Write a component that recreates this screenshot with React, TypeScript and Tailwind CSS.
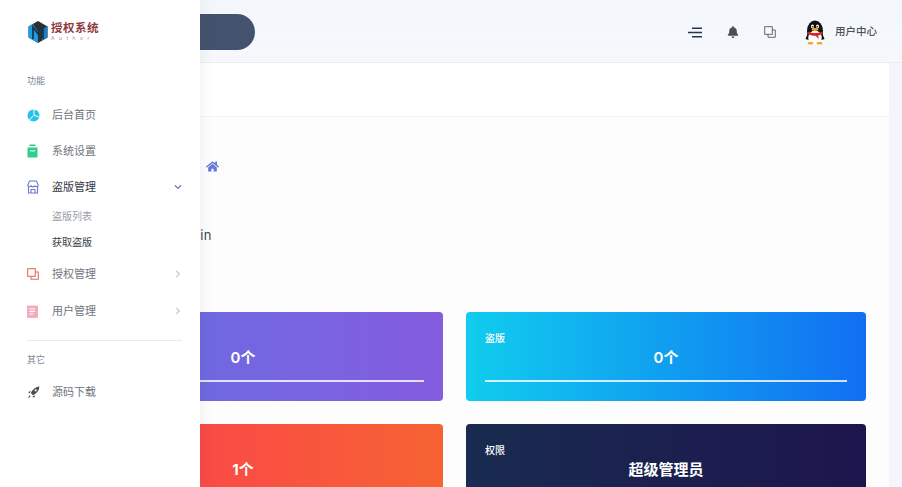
import React from 'react';
import { FaBell, FaHome, FaChevronDown, FaChevronRight } from 'react-icons/fa';

const font = "font-['Inter','Noto_Sans_CJK_SC',sans-serif]";

// Logo hexagon
const LogoMark = () => (
  <svg width="20" height="22" viewBox="0 0 20 22">
    <path d="M10 0 L19.5 5.5 V16.5 L10 22 L0.5 16.5 V5.5 Z" fill="#2b2f36" />
    <path d="M0.5 5.5 L5 3 L10 11 V22 L0.5 16.5 Z" fill="#1f9ce0" />
    <path d="M19.5 5.5 V16.5 L14 19.5 V8 Z" fill="#1a7fc0" />
    <path d="M5 18 V6 L10 13 L15 6 V18" fill="none" stroke="#17384f" strokeWidth="1.8" />
  </svg>
);

const PieIcon = () => (
  <svg width="13" height="13" viewBox="0 0 13 13">
    <circle cx="6.5" cy="6.5" r="6" fill="#27c2ec" />
    <path d="M7 6.2 V0 M7 6.2 L13 8.5 M6.5 6.5 L2 11.5" stroke="#fff" strokeWidth="1" />
  </svg>
);

const BagIcon = () => (
  <svg width="11" height="14" viewBox="0 0 11 14">
    <rect x="2.5" y="0.5" width="6" height="1.6" fill="#2fce8a" />
    <path d="M0.5 3.5 H10.5 V13.5 H0.5 Z" fill="#2fce8a" />
    <path d="M3.5 6 V7 H7.5 V6" stroke="#fff" strokeWidth="1" fill="none" />
  </svg>
);

const StoreIcon = () => (
  <svg width="12" height="14" viewBox="0 0 12 14" fill="none" stroke="#6f79c9" strokeWidth="1.1">
    <path d="M2.5 1 H9.5 L11.3 5.5 C10.5 7.2 8.8 7.2 8 5.8 C7.3 7.2 4.8 7.2 4 5.8 C3.2 7.2 1.5 7.2 0.7 5.5 Z" />
    <path d="M1.5 7 V13 H10.5 V7 M4 13 V9.5 H8 V13" />
  </svg>
);

const CopyIcon = ({ color, size, width }: { color: string; size: number; width: number }) => (
  <svg width={size} height={size} viewBox="0 0 12 12" fill="none" stroke={color} strokeWidth={width}>
    <rect x="0.7" y="0.7" width="7.6" height="7.6" />
    <path d="M4 8.3 V11.3 H11.3 V4 H8.3" />
  </svg>
);

const DocIcon = () => (
  <svg width="11" height="13" viewBox="0 0 11 13">
    <rect x="0" y="0.5" width="11" height="12.5" rx="1" fill="#f0aebf" />
    <path d="M2.5 4 H8 M2.5 6.5 H8 M2.5 9 H6" stroke="#fff" strokeWidth="1" />
  </svg>
);

const RocketIcon = () => (
  <svg width="13" height="13" viewBox="0 0 12 12">
    <path d="M11.5 0.5 C8 0.8 5 3 3.5 6.5 L5.5 8.5 C9 7 11.2 4 11.5 0.5 Z" fill="#4a4f57" />
    <circle cx="8" cy="4" r="1" fill="#fff" />
    <path d="M3.5 4.5 L1 5.5 L2.5 7 M7.5 8.5 L6.5 11 L5 9.5" fill="#4a4f57" />
    <path d="M2.5 8.5 L0.5 11.5 L3.5 9.5" fill="#4a4f57" />
  </svg>
);

const MenuIcon = () => (
  <svg width="14" height="11" viewBox="0 0 14 11" stroke="#26354d" strokeWidth="1.6">
    <path d="M4 1.2 H14 M0 5.5 H14 M4 9.8 H14" />
  </svg>
);

// QQ penguin avatar
const Penguin = () => (
  <svg width="22" height="25" viewBox="0 0 22 25">
    <ellipse cx="11" cy="11" rx="8" ry="10.5" fill="#111" />
    <path d="M1.5 19 L4 13 L4.5 20 Z M20.5 19 L18 13 L17.5 20 Z" fill="#111" />
    <ellipse cx="11" cy="17" rx="6.5" ry="6.5" fill="#fff" />
    <ellipse cx="8.5" cy="6.5" rx="1.5" ry="2" fill="#fff" />
    <ellipse cx="13.5" cy="6.5" rx="1.5" ry="2" fill="#fff" />
    <circle cx="8.8" cy="6.8" r="0.8" fill="#111" />
    <circle cx="13.2" cy="6.8" r="0.8" fill="#111" />
    <ellipse cx="11" cy="9.5" rx="3.4" ry="1.4" fill="#f0a818" />
    <path d="M4 11.5 C8 13.5 14 13.5 18 11.5 L18 14 C15.5 15.5 14 15.5 14 15.5 L15 19 L11.5 15.8 C8 15.8 5.5 15 4 14 Z" fill="#e0202a" />
    <ellipse cx="6.5" cy="23.3" rx="3" ry="1.2" fill="#f0a818" />
    <ellipse cx="15.5" cy="23.3" rx="3" ry="1.2" fill="#f0a818" />
  </svg>
);

const navItem = (icon: React.ReactNode, label: string, arrow?: 'right' | 'down', active?: boolean) => (
  <div className="flex h-[36px] items-center pl-[27px] pr-[18px]">
    <span className="flex w-[25px] justify-start">{icon}</span>
    <span className={`flex-1 text-[11px] ${active ? 'text-[#333a45]' : 'text-[#717680]'}`}>{label}</span>
    {arrow === 'right' && <FaChevronRight className="text-[8px] text-[#c4c8cf]" />}
    {arrow === 'down' && <FaChevronDown className="text-[8px] text-[#6f79c9]" />}
  </div>
);

const StatCard = ({ gradient, label, value, big }: { gradient: string; label: string; value: string; big?: boolean }) => (
  <div className={`h-[89px] rounded-[4px] px-[19px] pt-[19px] text-white ${gradient}`}>
    <div className="h-[14px] text-[10px] leading-[14px] font-medium">{label}</div>
    <div className={`mt-[3px] h-[20px] text-center text-[15px] leading-[20px] ${big ? 'font-bold' : 'font-semibold'}`}>{value}</div>
    <div className="mt-[12px] h-[2px] bg-white/80" />
  </div>
);

export default function App() {
  return (
    <div className={`relative h-screen overflow-hidden bg-[#f5f6fb] ${font}`}>
      {/* Sidebar sits over the page */}
      <aside className="absolute top-0 bottom-0 left-0 z-10 w-[200px] bg-white shadow-[0_0_14px_rgba(40,50,70,0.08)]">
        <div className="flex h-[61px] items-center pt-[2px] pl-[28px]">
          <LogoMark />
          <div className="ml-[3px] flex flex-col">
            <span className="text-[11.5px] leading-[14px] font-bold tracking-[0.5px] text-[#8f3a3f]">授权系统</span>
            <span className="text-[5px] leading-[7px] tracking-[4.5px] text-[#c98a8e]">Author</span>
          </div>
        </div>
        <div className="mt-[14px] pl-[27px] text-[9px] leading-[12px] text-[#7c8494]">功能</div>
        <div className="mt-[10px]">
          {navItem(<PieIcon />, '后台首页')}
          {navItem(<BagIcon />, '系统设置')}
          {navItem(<StoreIcon />, '盗版管理', 'down', true)}
          <div className="-mt-[2px] flex flex-col pl-[52px] text-[10px]">
            <span className="flex h-[26px] items-center text-[#9a9ea6]">盗版列表</span>
            <span className="flex h-[26px] items-center text-[#3b4048]">获取盗版</span>
          </div>
          <div className="h-px" />
          {navItem(<CopyIcon color="#e2705f" size={12} width={1.1} />, '授权管理', 'right')}
          <div className="h-px" />
          {navItem(<DocIcon />, '用户管理', 'right')}
        </div>
        <div className="mx-[27px] mt-[11px] mr-[18px] h-px bg-[#e8eaee]" />
        <div className="mt-[13px] pl-[27px] text-[9px] leading-[12px] text-[#7c8494]">其它</div>
        <div className="mt-[8px]">{navItem(<RocketIcon />, '源码下载')}</div>
      </aside>

      {/* Top bar */}
      <header className="mt-[2px] flex h-[61px] items-center border-b border-[#e9ecf1] bg-gradient-to-b from-[#f3f7fc] to-[#f6f8fb] pr-[25px] pl-[20px]">
        <div className="ml-[100px] h-[36px] w-[135px] rounded-r-[18px] rounded-l-[18px] bg-[#43536f]" />
        <div className="ml-auto flex items-center">
          <MenuIcon />
          <FaBell className="ml-[25px] text-[12px] text-[#4a5058]" />
          <span className="ml-[25px]"><CopyIcon color="#555b63" size={12} width={0.9} /></span>
          <span className="ml-[28px]"><Penguin /></span>
          <span className="ml-[9px] text-[10.5px] font-medium text-[#4b5058]">用户中心</span>
        </div>
      </header>

      {/* Main panel */}
      <main className="mr-[13px] ml-[20px] bg-white">
        <div className="h-[54px] border-b border-[#f3f4f7]" />
        <div className="bg-[#fdfdfe] px-[23px]">
          <div className="flex h-[98px] items-end pb-[42px] pl-[163px] text-[#6779d8]">
            <FaHome className="text-[13px]" />
          </div>
          <div className="h-[36px] pt-[2px] text-[13px] leading-[36px] tracking-[0.5px] text-[#3f4650]">
            <div className="w-[169px] text-right">admin</div>
          </div>
          <div className="h-[61px]" />
          <div className="grid grid-cols-2 gap-x-[23px] gap-y-[23px]">
            <StatCard gradient="bg-linear-to-r/srgb from-[#6270e2] to-[#845ddf]" label="授权" value="0个" />
            <StatCard gradient="bg-linear-to-r/srgb from-[#10cdee] to-[#116ff2]" label="盗版" value="0个" />
            <StatCard gradient="bg-linear-to-r/srgb from-[#fd3a52] to-[#f66333]" label="用户" value="1个" big />
            <StatCard gradient="bg-linear-to-r/srgb from-[#192b50] to-[#1d154d]" label="权限" value="超级管理员" big />
          </div>
        </div>
      </main>
    </div>
  );
}
